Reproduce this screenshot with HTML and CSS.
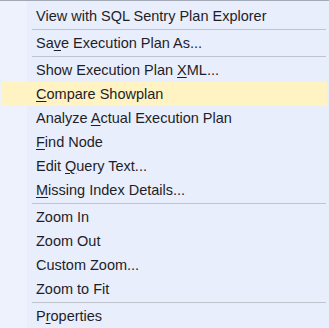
FILE: index.html
```html
<!DOCTYPE html>
<html lang="en">
<head>
    <meta charset="UTF-8">
    <title>Plan Context Menu</title>
    <link rel="stylesheet" href="styles.css">
</head>
<body>
    <div class="menu">
        <div class="item">View with SQL Sentry Plan Explorer</div>
        <div class="sep"></div>
        <div class="item">Sa<u>v</u>e Execution Plan As...</div>
        <div class="sep"></div>
        <div class="item">Show Execution Plan <u>X</u>ML...</div>
        <div class="item active"><u>C</u>ompare Showplan</div>
        <div class="item">Analyze <u>A</u>ctual Execution Plan</div>
        <div class="item"><u>F</u>ind Node</div>
        <div class="item">Edit <u>Q</u>uery Text...</div>
        <div class="item"><u>M</u>issing Index Details...</div>
        <div class="sep"></div>
        <div class="item">Zoom In</div>
        <div class="item">Zoom Out</div>
        <div class="item">Custom Zoom...</div>
        <div class="item">Zoom to Fit</div>
        <div class="sep"></div>
        <div class="item">P<u>r</u>operties</div>
    </div>
</body>
</html>
```

FILE: styles.css
```css
body {
    margin: 0;
    padding: 0;
    background: #e9eefc;
    font-family: 'Liberation Sans', Arial, sans-serif;
}

/* Menu with the lighter icon gutter on the left */
.menu {
    width: 329px;
    height: 328px;
    box-sizing: border-box;
    border-top: 1px solid #a3a9b4;
    padding-top: 3px;
    background: linear-gradient(to right, #eef2fc 0, #eef2fc 27px, #e9eefc 27px);
    overflow: hidden;
}

.item {
    height: 24px;
    line-height: 24px;
    margin: 0 2px;
    padding-left: 34px;
    font-size: 14.5px;
    color: #1e1e28;
    white-space: nowrap;
}

.item u {
    text-underline-offset: 2px;
}

.item.active {
    background: #fff3c3;
}

.sep {
    height: 3px;
    display: flex;
    align-items: center;
    padding: 0 3px 0 32px;
}

.sep::before {
    content: '';
    flex: 1;
    height: 1px;
    background: #bfc3cc;
}
```
